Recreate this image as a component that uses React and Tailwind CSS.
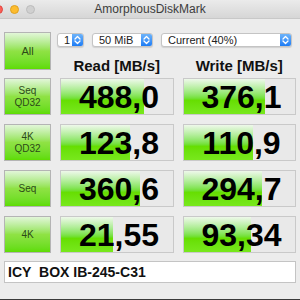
import React from 'react';

const ROWS = [
  { label: ['Seq', 'QD32'], read: '488,0', readW: 83, write: '376,1', writeW: 81 },
  { label: ['4K', 'QD32'], read: '123,8', readW: 69, write: '110,9', writeW: 69 },
  { label: ['Seq'], read: '360,6', readW: 79, write: '294,7', writeW: 78 },
  { label: ['4K'], read: '21,55', readW: 52, write: '93,34', writeW: 67 },
];

const FONT = { fontFamily: '"Liberation Sans", Arial, sans-serif' };

function Chevrons() {
  return (
    <svg width="7" height="10" viewBox="0 0 7 10" fill="none" stroke="white" strokeWidth="1.3" strokeLinecap="round" strokeLinejoin="round">
      <path d="M1 4 L3.5 1.5 L6 4" />
      <path d="M1 6 L3.5 8.5 L6 6" />
    </svg>
  );
}

function Popup({ label, className }) {
  return (
    <div className={`flex h-[14px] items-stretch rounded-[3px] border border-[#c4c4c4] bg-white shadow-[0_1px_1px_rgba(0,0,0,0.12)] ${className}`}>
      <span className="flex-1 pl-[6px] text-[11px] leading-[12px] text-[#222]">{label}</span>
      <span className="flex w-[11px] items-center justify-center rounded-r-[2px] bg-gradient-to-b from-[#6cb3fa] to-[#1a7cf5]">
        <Chevrons />
      </span>
    </div>
  );
}

function GreenButton({ lines, className }) {
  return (
    <div className={`flex flex-col items-center justify-center border border-[#b4b4b4] bg-gradient-to-b from-[#e2f6d8] via-[#8fe244] to-[#5edc00] text-[10px] leading-[12px] text-[#2c4a18] ${className}`}>
      {lines.map((l) => (
        <span key={l}>{l}</span>
      ))}
    </div>
  );
}

function ValueBox({ value, barW }) {
  return (
    <div className="relative h-[37px] border border-[#c9c9c9] bg-[#e9e9e9]">
      <div
        className="absolute left-0 top-0 h-full bg-gradient-to-b from-[#eef8ea] via-[#66de00] via-60% to-[#78e81c]"
        style={{ width: barW }}
      />
      <div className="relative flex h-full items-center justify-center pl-[4px] text-[32px] font-bold leading-none text-black">
        {value}
      </div>
    </div>
  );
}

export default function App() {
  return (
    <div className="flex h-[300px] w-[300px] flex-col bg-[#ececec]" style={FONT}>
      {/* title bar */}
      <div className="relative flex h-[19px] items-center justify-center border-b border-[#c8c8c8] bg-gradient-to-b from-[#ebebeb] to-[#d6d6d6]">
        <span className="absolute left-[-6px] top-[5px] h-[9px] w-[9px] rounded-full bg-[#fc5f57] border border-[#e0443e]" />
        <span className="absolute left-[10px] top-[5px] h-[9px] w-[9px] rounded-full bg-[#fdbc2e] border border-[#dea123]" />
        <span className="absolute left-[26px] top-[5px] h-[9px] w-[9px] rounded-full bg-[#d0d0d0] border border-[#bcbcbc]" />
        <span className="text-[12px] text-[#3c3c3c]">AmorphousDiskMark</span>
      </div>

      <div className="grid grid-cols-[47px_114px_113px] gap-x-[9px] px-[4px] pt-[13px]">
        {/* top row */}
        <GreenButton lines={['All']} className="h-[38px] text-[11px]" />
        <div className="col-span-2 flex h-[38px] flex-col">
          <div className="flex gap-[8px] pt-[1px]">
            <Popup label="1" className="ml-[-3px] w-[27px]" />
            <Popup label="50 MiB" className="w-[61px]" />
            <Popup label="Current (40%)" className="w-[131px]" />
          </div>
          <div className="grid flex-1 grid-cols-2 gap-x-[9px] pt-[8px] text-[15px] font-bold text-[#111]">
            <span className="text-center">Read [MB/s]</span>
            <span className="text-center">Write [MB/s]</span>
          </div>
        </div>
      </div>

      <div className="mt-[8px] grid grid-cols-[47px_114px_113px] gap-x-[9px] gap-y-[9px] px-[4px]">
        {ROWS.map((r) => (
          <React.Fragment key={r.label.join(' ')}>
            <GreenButton lines={r.label} className="h-[37px]" />
            <ValueBox value={r.read} barW={r.readW} />
            <ValueBox value={r.write} barW={r.writeW} />
          </React.Fragment>
        ))}
      </div>

      <div className="mx-[4px] mt-[8px] flex h-[22px] items-center border border-[#c4c4c4] bg-white pl-[3px] text-[14px] font-bold text-[#111]">
        ICY&nbsp;&nbsp;BOX IB-245-C31
      </div>

      <div className="flex-1" />
      <div className="h-[1px] bg-[#3a3a3a]" />
    </div>
  );
}
